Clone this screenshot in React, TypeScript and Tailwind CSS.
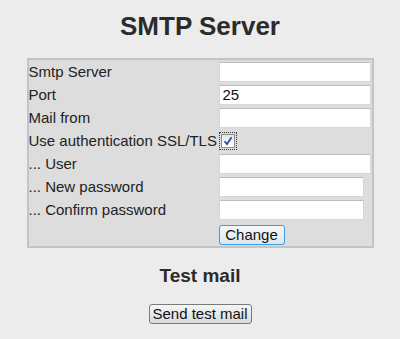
const rows: { label: string; value?: string; narrow?: boolean }[] = [
  { label: "Smtp Server", value: "" },
  { label: "Port", value: "25" },
  { label: "Mail from", value: "" },
];

const authRows: { label: string; narrow?: boolean }[] = [
  { label: "... User" },
  { label: "... New password", narrow: true },
  { label: "... Confirm password", narrow: true },
];

function TextBox({ value, narrow }: { value?: string; narrow?: boolean }) {
  return (
    <div
      className={`h-[20px] bg-white border border-[#d6d6d6] border-t-[#bdbdbd] pl-[3px] text-[15px] leading-[18px] text-[#111] ${
        narrow ? "w-[145px]" : "w-[152px]"
      }`}
    >
      {value}
    </div>
  );
}

export default function App() {
  return (
    <div className="min-h-[339px] bg-[#ececec] text-[#222] font-['Liberation_Sans',Arial,sans-serif]">
      <h1 className="pt-[13px] text-center text-[26px] font-bold leading-none text-[#2b2b2b]">
        SMTP Server
      </h1>

      <div className="mx-auto mt-[19px] w-[347px] border-2 border-[#c4c4c4] bg-[#dddddd] pt-[2px] pb-[3px]">
        <div className="grid grid-cols-[190px_1fr] gap-y-[3px]">
          {rows.map((r) => (
            <div key={r.label} className="contents">
              <div className="flex h-[20px] items-center text-[15px] leading-[20px]">{r.label}</div>
              <TextBox value={r.value} />
            </div>
          ))}

          <div className="flex h-[20px] items-center text-[15px] leading-[20px] whitespace-nowrap">
            Use authentication SSL/TLS
          </div>
          <div className="flex h-[20px] items-center">
            <span className="inline-flex border border-dotted border-[#333] p-[1px]">
              <span className="flex h-[14px] w-[14px] items-center justify-center border border-[#8e8f8f] bg-gradient-to-b from-[#e6e6e6] to-white">
                <svg width="10" height="10" viewBox="0 0 10 10">
                  <path d="M1.5 5.2 L4 8 L8.6 1.2" fill="none" stroke="#2446a8" strokeWidth="1.7" />
                </svg>
              </span>
            </span>
          </div>

          {authRows.map((r) => (
            <div key={r.label} className="contents">
              <div className="flex h-[20px] items-center text-[15px] leading-[20px]">{r.label}</div>
              <TextBox narrow={r.narrow} />
            </div>
          ))}

          <div className="h-[20px]" />
          <div className="h-[20px]">
            <button className="h-[20px] w-[66px] rounded-[3px] border border-[#3c9ee0] bg-gradient-to-b from-[#f5f9fc] to-[#dde6ee] text-[15px] leading-[16px] text-[#111]">
              Change
            </button>
          </div>
        </div>
      </div>

      <h2 className="mt-[18px] text-center text-[19px] font-bold leading-none text-[#2b2b2b]">Test mail</h2>

      <div className="mt-[19px] flex justify-center">
        <button className="h-[20px] w-[103px] rounded-[3px] border border-[#7a7a7a] bg-gradient-to-b from-[#f6f6f6] to-[#dadada] text-[15px] leading-[16px] text-[#111]">
          Send test mail
        </button>
      </div>
    </div>
  );
}
